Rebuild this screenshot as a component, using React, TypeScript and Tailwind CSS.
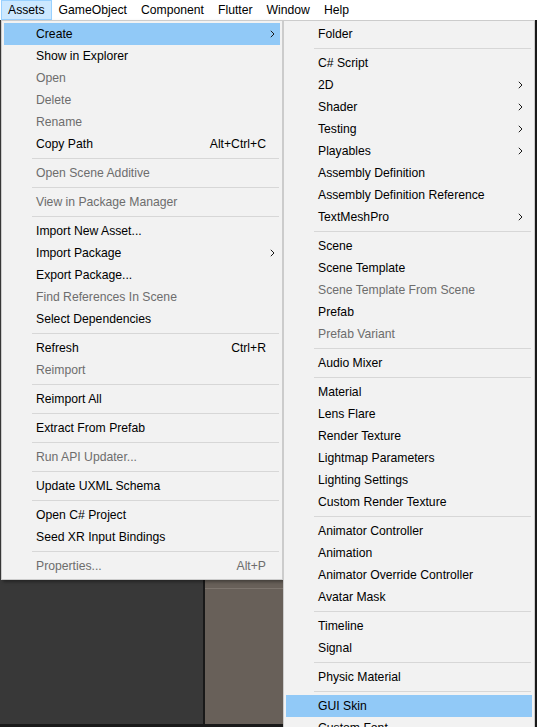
import React from 'react';

type Entry =
  | 'sep'
  | {
      label: string;
      shortcut?: string;
      disabled?: boolean;
      sub?: boolean;
      active?: boolean;
    };

const assetsMenu: Entry[] = [
  { label: 'Create', sub: true, active: true },
  { label: 'Show in Explorer' },
  { label: 'Open', disabled: true },
  { label: 'Delete', disabled: true },
  { label: 'Rename', disabled: true },
  { label: 'Copy Path', shortcut: 'Alt+Ctrl+C' },
  'sep',
  { label: 'Open Scene Additive', disabled: true },
  'sep',
  { label: 'View in Package Manager', disabled: true },
  'sep',
  { label: 'Import New Asset...' },
  { label: 'Import Package', sub: true },
  { label: 'Export Package...' },
  { label: 'Find References In Scene', disabled: true },
  { label: 'Select Dependencies' },
  'sep',
  { label: 'Refresh', shortcut: 'Ctrl+R' },
  { label: 'Reimport', disabled: true },
  'sep',
  { label: 'Reimport All' },
  'sep',
  { label: 'Extract From Prefab' },
  'sep',
  { label: 'Run API Updater...', disabled: true },
  'sep',
  { label: 'Update UXML Schema' },
  'sep',
  { label: 'Open C# Project' },
  { label: 'Seed XR Input Bindings' },
  'sep',
  { label: 'Properties...', shortcut: 'Alt+P', disabled: true },
];

const createMenu: Entry[] = [
  { label: 'Folder' },
  'sep',
  { label: 'C# Script' },
  { label: '2D', sub: true },
  { label: 'Shader', sub: true },
  { label: 'Testing', sub: true },
  { label: 'Playables', sub: true },
  { label: 'Assembly Definition' },
  { label: 'Assembly Definition Reference' },
  { label: 'TextMeshPro', sub: true },
  'sep',
  { label: 'Scene' },
  { label: 'Scene Template' },
  { label: 'Scene Template From Scene', disabled: true },
  { label: 'Prefab' },
  { label: 'Prefab Variant', disabled: true },
  'sep',
  { label: 'Audio Mixer' },
  'sep',
  { label: 'Material' },
  { label: 'Lens Flare' },
  { label: 'Render Texture' },
  { label: 'Lightmap Parameters' },
  { label: 'Lighting Settings' },
  { label: 'Custom Render Texture' },
  'sep',
  { label: 'Animator Controller' },
  { label: 'Animation' },
  { label: 'Animator Override Controller' },
  { label: 'Avatar Mask' },
  'sep',
  { label: 'Timeline' },
  { label: 'Signal' },
  'sep',
  { label: 'Physic Material' },
  'sep',
  { label: 'GUI Skin', active: true },
  { label: 'Custom Font' },
];

function Chevron() {
  return (
    <svg width="5" height="8" viewBox="0 0 5 8" className="block">
      <polyline points="0.8,0.8 4,4 0.8,7.2" fill="none" stroke="#1a1a1a" strokeWidth="1" />
    </svg>
  );
}

function Menu({ items, arrowCol }: { items: Entry[]; arrowCol: string }) {
  return (
    <div className="flex flex-col">
      {items.map((it, i) => {
        if (it === 'sep') {
          return (
            <div key={i} className="py-[3px] pl-[28px] pr-[1px]">
              <div className="h-px bg-[#d7d7d7]" />
            </div>
          );
        }
        return (
          <div
            key={i}
            className={`flex h-[22px] items-center pl-[32px] ${it.active ? 'bg-[#91c9f7]' : ''} ${
              it.disabled ? 'text-[#6d6d6d]' : 'text-black'
            }`}
          >
            <span className="flex-1 whitespace-nowrap">{it.label}</span>
            {it.shortcut && <span className="whitespace-nowrap">{it.shortcut}</span>}
            <span className={`flex ${arrowCol} items-center justify-end`}>{it.sub && <Chevron />}</span>
          </div>
        );
      })}
    </div>
  );
}

export default function App() {
  const menuBar = ['Assets', 'GameObject', 'Component', 'Flutter', 'Window', 'Help'];

  return (
    <div className="relative flex h-[727px] w-[537px] flex-col overflow-hidden bg-[#383838] font-['Liberation_Sans',Arial,sans-serif] text-[12.2px]">
      {/* Menu bar */}
      <div className="flex h-[20px] items-stretch bg-white pl-px">
        {menuBar.map((m, i) => (
          <div
            key={m}
            className={`flex items-center px-[6px] text-black ${
              i === 0 ? 'border border-[#99d1ff] bg-[#cce8ff]' : 'border border-transparent'
            }`}
          >
            {m}
          </div>
        ))}
      </div>

      {/* Editor background */}
      <div className="flex flex-1 flex-col">
        <div className="flex flex-1">
          <div className="w-[203px] bg-[#383838]" />
          <div className="w-[2px] bg-[#191919]" />
          <div className="flex flex-1 flex-col bg-[#686059]">
            <div className="h-[568px]" />
            <div className="h-px bg-[#7d756e]" />
          </div>
          <div className="w-[2px] bg-[#191919]" />
        </div>
        <div className="h-[3px] bg-[#191919]" />
      </div>

      {/* Assets dropdown */}
      <div className="absolute left-px top-[20px] w-[282px] border border-[#cccccc] bg-[#f2f2f2] p-[2px] shadow-[2px_2px_3px_rgba(0,0,0,0.35)]">
        <Menu items={assetsMenu} arrowCol="w-[14px] pr-[5px]" />
      </div>

      {/* Create submenu */}
      <div className="absolute left-[283px] top-[20px] w-[252px] border border-[#cccccc] bg-[#f2f2f2] p-[2px]">
        <Menu items={createMenu} arrowCol="w-[20px] pr-[9px]" />
      </div>
    </div>
  );
}
